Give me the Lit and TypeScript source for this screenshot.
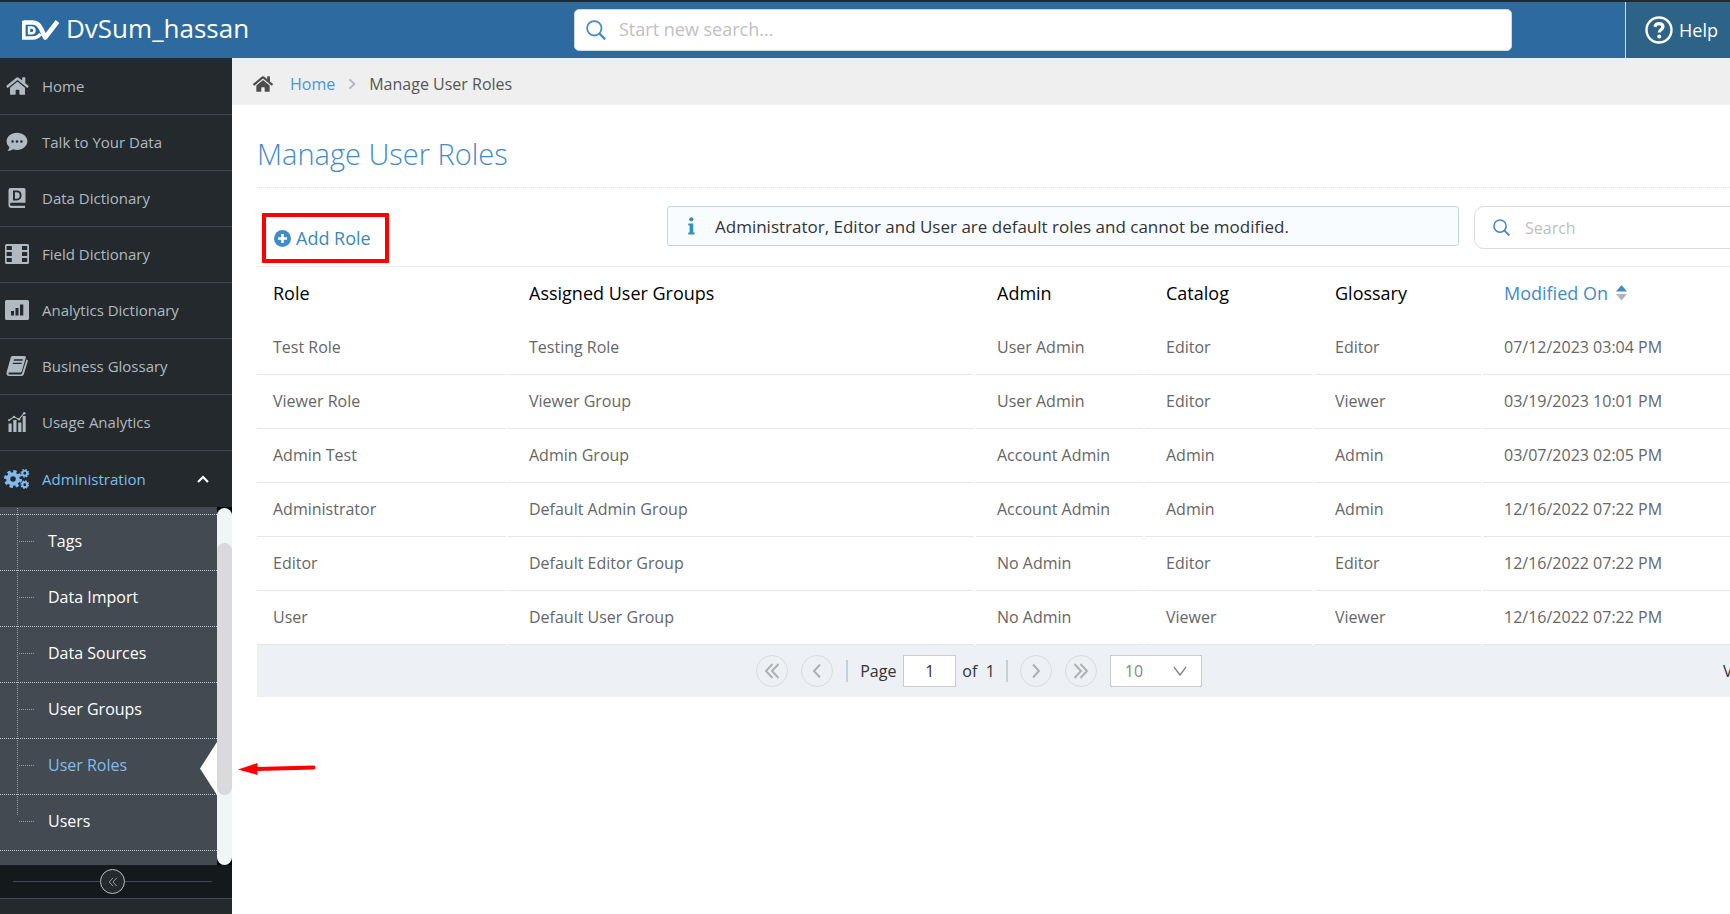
import { LitElement, html, css, svg } from "lit";
import { customElement, state } from "lit/decorators.js";

const homePath =
  "M280.37 148.26L96 300.11V464a16 16 0 0 0 16 16l112.06-.29a16 16 0 0 0 15.92-16V368a16 16 0 0 1 16-16h64a16 16 0 0 1 16 16v95.64a16 16 0 0 0 16 16.05L464 480a16 16 0 0 0 16-16V300L295.67 148.26a12.19 12.19 0 0 0-15.3 0zM571.6 251.47L488 182.56V44.05a12 12 0 0 0-12-12h-56a12 12 0 0 0-12 12v72.61L318.47 43a48 48 0 0 0-61 0L4.34 251.47a12 12 0 0 0-1.6 16.9l25.5 31A12 12 0 0 0 45.15 301l235.22-193.74a12.19 12.19 0 0 1 15.3 0L530.9 301a12 12 0 0 0 16.9-1.6l25.5-31a12 12 0 0 0-1.7-16.93z";

const icons: Record<string, unknown> = {
  home: html`<svg viewBox="0 0 576 512" width="23" height="20" fill="currentColor"><path d=${homePath} /></svg>`,
  chat: html`<svg viewBox="0 0 24 20" width="24" height="20" fill="currentColor">
    <path fill-rule="evenodd" d="M12 .8C6.200.8 1.600 4.600 1.600 9.300c0 2.300 1 4.300 2.800 5.800-.2 1.500-.9 2.900-1.900 4 2.200-.2 4-.8 5.400-1.800 1.300.4 2.700.6 4.100.6 5.800 0 10.400-3.800 10.400-8.600S17.800.8 12 .8zM7.600 8.200a1.300 1.300 0 1 1 0 2.600 1.300 1.300 0 0 1 0-2.600zm4.400 0a1.300 1.300 0 1 1 0 2.600 1.300 1.300 0 0 1 0-2.600zm4.400 0a1.300 1.300 0 1 1 0 2.600 1.300 1.300 0 0 1 0-2.600z"/></svg>`,
  dictionary: html`<svg viewBox="0 0 24 20" width="24" height="20" fill="currentColor">
    <path fill-rule="evenodd" d="M5.500 0H19a1.500 1.500 0 0 1 1.500 1.500v13.300H6c-1 0-1.200 2.900 0 2.900h14V20H6.200C4.500 20 3.500 18.700 3.500 17V2a2 2 0 0 1 2-2zM8 2.600v9.800h3.800c3 0 4.800-1.900 4.800-4.900s-1.800-4.900-4.800-4.900zm1.900 1.600h1.800c2 0 3 1.200 3 3.300s-1 3.300-3 3.300H9.900z"/><path d="M6.300 15.700h13.500v1.100H6.300z" fill="#23292c"/></svg>`,
  film: html`<svg viewBox="0 0 24 20" width="24" height="20" fill="currentColor">
    <path fill-rule="evenodd" d="M1.500 0h21A1.500 1.500 0 0 1 24 1.500v17a1.500 1.500 0 0 1-1.500 1.500h-21A1.500 1.500 0 0 1 0 18.500v-17A1.500 1.500 0 0 1 1.500 0zM1.600 2v4h5.200V2zm0 6v4h5.200V8zm0 6v4h5.200v-4zM17 2v4h5.200V2zm0 6v4h5.200V8zm0 6v4h5.200v-4z"/></svg>`,
  chart: html`<svg viewBox="0 0 24 20" width="24" height="20" fill="currentColor">
    <path fill-rule="evenodd" d="M1.500 0h21A1.500 1.500 0 0 1 24 1.500v17a1.500 1.500 0 0 1-1.500 1.500h-21A1.500 1.500 0 0 1 0 18.500v-17A1.500 1.500 0 0 1 1.500 0zM6 11v4.500h3V11zm4.500-3v7.500h3V8zM15 4.500v11h3.300v-11z"/></svg>`,
  book: html`<svg viewBox="0 0 24 20" width="24" height="20" fill="currentColor">
    <path fill-rule="evenodd" d="M7.800 0h11.700c1 0 1.600.8 1.300 1.800l-4 13.400c-.3.900-1 1.300-1.800 1.300H4.200c-.9 0-1.200 2 .3 2h11c.8 0 1.200-.4 1.500-1.200L21.500 3.400c1 .2 1.600.8 1.300 1.900l-4 13c-.4 1.100-1.200 1.700-2.300 1.700H4.300C2.300 20 1 18.200 1.600 16.200L5.800 1.500C6.100.5 6.800 0 7.800 0zM9 3.300l-.4 1.400h8.900l.4-1.400zM8 6.700l-.4 1.400h8.900l.4-1.400z"/></svg>`,
  usage: html`<svg viewBox="0 0 24 20" width="24" height="20" fill="currentColor">
    <path d="M3.500 11.500h3.200V20H3.500zM8.300 8h3.200v12H8.300zM13.200 10.500h3.200V20h-3.200zM17.700 4h3v16h-3z"/><path d="M4 8.200l5-3.400 5 2.600L19.300.9" fill="none" stroke="currentColor" stroke-width="1.100"/><circle cx="4.200" cy="8.200" r="1.100"/><circle cx="9" cy="4.900" r="1.200"/><circle cx="14" cy="7.300" r="1.200"/><circle cx="19.300" cy="1.200" r="1.200"/></svg>`,
  cogs: html`<svg viewBox="0 0 26 20" width="26" height="20" fill="none" stroke="currentColor">
    <circle cx="9" cy="10" r="4.800" stroke-width="4"/><circle cx="9" cy="10" r="7.600" stroke-width="2.800" stroke-dasharray="3.300 2.670"/>
    <circle cx="20.800" cy="4.300" r="2.400" stroke-width="1.900"/><circle cx="20.800" cy="4.300" r="3.700" stroke-width="1.300" stroke-dasharray="1.600 1.300"/>
    <circle cx="20.800" cy="15.700" r="2.400" stroke-width="1.900"/><circle cx="20.800" cy="15.700" r="3.700" stroke-width="1.300" stroke-dasharray="1.600 1.300"/></svg>`,
};

const magnifier = html`<svg class="lens" viewBox="0 0 20 20" width="20" height="20" fill="none" stroke="currentColor" stroke-width="1.800" aria-hidden="true"><circle cx="8.300" cy="8.300" r="7.200"/><path d="M13.200 13.400L19.200 19.400" stroke-width="2.200"/></svg>`;

const chevrons = (...paths: string[]) => html`<svg viewBox="0 0 16 16" width="16" height="16" fill="none" stroke="currentColor" stroke-width="2" aria-hidden="true">
  ${paths.map((d) => svg`<path d=${d} />`)}
</svg>`;

const menu = [
  ["home", "Home"],
  ["chat", "Talk to Your Data"],
  ["dictionary", "Data Dictionary"],
  ["film", "Field Dictionary"],
  ["chart", "Analytics Dictionary"],
  ["book", "Business Glossary"],
  ["usage", "Usage Analytics"],
];

const submenu = ["Tags", "Data Import", "Data Sources", "User Groups", "User Roles", "Users"];

const roles = [
  ["Test Role", "Testing Role", "User Admin", "Editor", "Editor", "07/12/2023 03:04 PM"],
  ["Viewer Role", "Viewer Group", "User Admin", "Editor", "Viewer", "03/19/2023 10:01 PM"],
  ["Admin Test", "Admin Group", "Account Admin", "Admin", "Admin", "03/07/2023 02:05 PM"],
  ["Administrator", "Default Admin Group", "Account Admin", "Admin", "Admin", "12/16/2022 07:22 PM"],
  ["Editor", "Default Editor Group", "No Admin", "Editor", "Editor", "12/16/2022 07:22 PM"],
  ["User", "Default User Group", "No Admin", "Viewer", "Viewer", "12/16/2022 07:22 PM"],
];

const base = css`
  * { box-sizing: border-box; }
  button, input, select { font: inherit; color: inherit; margin: 0; }
  button { background: none; border: 0; padding: 0; cursor: pointer; }
  a { color: inherit; text-decoration: none; }
  svg { display: block; flex: none; }
  input::placeholder { color: #bfbfbf; opacity: 1; }
`;

@customElement("top-bar")
class TopBar extends LitElement {
  static styles = [base, css`
    :host { display: flex; align-items: stretch; height: 58px; border-top: 2px solid #23292c; background: #2d6aa0; color: #fff; }
    .brand { display: flex; align-items: center; gap: 6px; flex: 0 0 574px; padding-left: 22px; font-size: 26px; line-height: 52px; padding-bottom: 4px; }
    .logo { margin-top: 4px; }
    .search { flex: 1; align-self: center; display: flex; align-items: center; height: 42px; gap: 13px; padding: 0 11px; margin-right: 113px; border: 1px solid #d3d8dc; border-radius: 5px; background: #fff; color: #428bca; }
    .search input { flex: 1; border: 0; outline: 0; background: none; color: #555; font-size: 18px; padding: 0 0 2px; }
    .help { display: flex; align-items: center; gap: 6px; flex: 0 0 105px; padding-left: 19px; border-left: 1px solid #d5e1ea; background: #2e6388; font-size: 18px; }
  `];
  render() {
    return html`
      <a class="brand" href="#">
        <svg class="logo" viewBox="0 0 38 21" width="38" height="21" fill="none" stroke="#fff" aria-hidden="true">
          <path d="M1.700 2.500H10.500C15 2.500 17.300 5 19 8.500L23.200 17.500L35.500 1.500" stroke-width="4.600" stroke-linejoin="round"/>
          <path d="M1.800 .8V18H10.500C14 18 16.500 16.800 18.500 14" stroke-width="3.600"/>
          <path d="M7 7.500V13.300H9.500C13.500 13.300 13.500 7.500 9.500 7.500Z" stroke-width="2.400"/>
        </svg>
        <span>DvSum_hassan</span>
      </a>
      <label class="search">${magnifier}<input type="text" placeholder="Start new search..." aria-label="Start new search" /></label>
      <button class="help">
        <svg viewBox="0 0 28 28" width="28" height="28" fill="none" stroke="#fff" aria-hidden="true">
          <circle cx="14" cy="14" r="12.500" stroke-width="2.400"/>
          <path d="M9.800 10.800C10.500 8.500 12 7.700 14 7.700C16.500 7.700 18 9 18 10.800C18 13.500 14.200 13.400 14.200 16.600" stroke-width="3.200"/>
          <circle cx="14.200" cy="20.400" r="2" fill="#fff" stroke="none"/>
        </svg>
        <span>Help</span>
      </button>`;
  }
}

@customElement("side-nav")
class SideNav extends LitElement {
  @state() active = "User Roles";
  static styles = [base, css`
    :host { display: flex; flex-direction: column; flex: 0 0 232px; min-height: 0; background: #23292c; color: #b1b9c1; font-size: 15px; }
    nav { padding-top: 1px; }
    .item { display: flex; align-items: center; gap: 13px; width: 100%; height: 56px; padding: 0 0 1px 5px; border-bottom: 1px solid #3d4b53; text-align: left; }
    .glyph { width: 24px; display: flex; align-items: center; justify-content: center; }
    .open { color: #81bced; border-bottom: 0; padding-bottom: 0; }
    .open .caret { color: #fff; margin-left: auto; margin-right: 21px; }
    .panel { flex: 1; min-height: 0; display: flex; background: #01060d; }
    .list { flex: 1; min-height: 0; overflow: hidden; position: relative; background: #434a52; color: #fff; font-size: 16px; padding-top: 7px; }
    .list::before { content: ""; position: absolute; left: 17px; top: 1px; height: 307px; border-left: 1px dotted #98a2ab; }
    .sub { position: relative; display: flex; align-items: center; height: 56px; padding-left: 48px; padding-bottom: 3px; border-top: 1px dotted #b9c6cf; }
    .sub::before { content: ""; position: absolute; left: 19px; top: 26px; width: 15px; border-top: 1px dotted #98a2ab; }
    .end { border-top: 1px dotted #b9c6cf; }
    .current { color: #81bced; }
    .current::after { content: ""; position: absolute; right: 0; top: 3px; width: 17px; height: 53px; background: #fff; clip-path: polygon(100% 0, 0 50%, 100% 100%); }
    .rail { width: 15px; border-radius: 8px; background: #f0f5f5; padding: 35px 0 70px; margin-top: 1px; display: flex; }
    .thumb { flex: 1; border-radius: 8px; background: #d9d9de; }
    .foot { display: flex; align-items: center; height: 34px; padding: 0 20px 0 13px; background: #14191b; border-bottom: 1px solid #3d4b53; }
    .foot::before, .foot::after { content: ""; flex: 1; border-top: 1px solid #3d4b53; }
    .fold { display: flex; align-items: center; justify-content: center; width: 25px; height: 25px; border: 1px solid #b9bdc0; border-radius: 50%; background: #23292c; color: #a4aaae; }
    .fold svg { width: 12px; height: 12px; }
    .rest { height: 15px; }
  `];
  render() {
    return html`
      <nav>
        ${menu.map(([icon, label]) => html`<a class="item" href="#"><span class="glyph">${icons[icon]}</span>${label}</a>`)}
        <button class="item open" aria-expanded="true"><span class="glyph">${icons.cogs}</span>Administration
          <svg class="caret" viewBox="0 0 16 16" width="16" height="16" fill="none" stroke="currentColor" stroke-width="2.200" aria-hidden="true"><path d="M3 11L8 6L13 11"/></svg>
        </button>
      </nav>
      <div class="panel">
        <div class="list">
          ${submenu.map((label) => html`<a class="sub ${label === this.active ? "current" : ""}" href="#" @click=${() => (this.active = label)}>${label}</a>`)}
          <div class="end"></div>
        </div>
        <div class="rail"><div class="thumb"></div></div>
      </div>
      <div class="foot"><button class="fold" aria-label="Collapse menu">
        <svg viewBox="0 0 16 16" fill="none" stroke="currentColor" stroke-width="1.200" aria-hidden="true"><path d="M8 2.500L3 8L8 13.500M13 2.500L8 8L13 13.500"/></svg>
      </button></div>
      <div class="rest"></div>`;
  }
}

@customElement("role-table")
class RoleTable extends LitElement {
  static styles = [base, css`
    :host { display: block; }
    table { width: calc(100% + 2px); margin-left: -2px; table-layout: fixed; border-collapse: separate; border-spacing: 2px 0; font-size: 16px; color: #666; }
    .c-role { width: 249px; }
    .c-groups { width: 466px; }
    .c-level { width: 167px; }
    th, td { height: 54px; padding: 0 0 2px 21px; text-align: left; white-space: nowrap; }
    th:first-child, td:first-child { padding-left: 16px; }
    th { font-weight: 500; font-size: 18px; color: #000; }
    td { border-bottom: 1px solid #e6e6e6; }
    .sort { display: flex; align-items: center; gap: 8px; color: #428bca; }
    .pager { display: flex; align-items: center; height: 52px; background: #edf0f5; color: #333; font-size: 16px; }
    .controls { flex: 1; display: flex; align-items: center; justify-content: center; }
    .round { display: flex; align-items: center; justify-content: center; width: 32px; height: 32px; margin-right: 13px; border: 1px solid #d9dcdf; border-radius: 50%; color: #b0b0b0; }
    .bar { width: 2px; height: 22px; background: #c5d1d8; margin-right: 12px; }
    .number { width: 53px; height: 32px; margin: 0 6px 0 7px; padding: 0; border: 1px solid #ccc; border-radius: 0; background: #fff; text-align: center; }
    .page { display: flex; align-items: center; }
    .total { margin-right: 11px; }
    .size { position: relative; display: flex; align-items: center; }
    .size select { appearance: none; width: 92px; height: 32px; padding: 0 14px; border: 1px solid #ccc; border-radius: 0; background: #fff; color: #888; }
    .size svg { position: absolute; right: 14px; pointer-events: none; color: #888; }
    .status { flex: 0 0 129px; padding-left: 22px; white-space: nowrap; }
  `];
  render() {
    return html`
      <table>
        <colgroup><col class="c-role" /><col class="c-groups" /><col class="c-level" /><col class="c-level" /><col class="c-level" /><col /></colgroup>
        <thead><tr>
          <th>Role</th><th>Assigned User Groups</th><th>Admin</th><th>Catalog</th><th>Glossary</th>
          <th><button class="sort">Modified On
            <svg viewBox="0 0 11 16" width="11" height="16" aria-hidden="true"><path d="M5.500 0L11 6.500H0z" fill="#428bca"/><path d="M0 9H11L5.500 15.500z" fill="#b0b5bb"/></svg>
          </button></th>
        </tr></thead>
        <tbody>${roles.map((row) => html`<tr>${row.map((cell) => html`<td>${cell}</td>`)}</tr>`)}</tbody>
      </table>
      <div class="pager">
        <div class="controls">
          <button class="round" aria-label="First page">${chevrons("M8.500 1L2 8L8.500 15", "M14.500 1L8 8L14.500 15")}</button>
          <button class="round" aria-label="Previous page">${chevrons("M11 1.500L5 8L11 14.500")}</button>
          <span class="bar"></span>
          <label class="page">Page <input class="number" type="text" .value=${"1"} /></label>
          <span class="total">of&nbsp; 1</span>
          <span class="bar"></span>
          <button class="round" aria-label="Next page">${chevrons("M5 1.500L11 8L5 14.500")}</button>
          <button class="round" aria-label="Last page">${chevrons("M1.500 1L8 8L1.500 15", "M7.500 1L14 8L7.500 15")}</button>
          <span class="size">
            <select aria-label="Rows per page"><option>10</option><option>25</option><option>50</option></select>
            <svg viewBox="0 0 16 12" width="16" height="12" fill="none" stroke="currentColor" stroke-width="1.400" aria-hidden="true"><path d="M2 2L8 10L14 2"/></svg>
          </span>
        </div>
        <span class="status">View 1 - 6 of 6</span>
      </div>`;
  }
}

@customElement("app-root")
class AppRoot extends LitElement {
  static styles = [base, css`
    :host { display: flex; flex-direction: column; height: 100vh; overflow: hidden; background: #fff; font-family: "Open Sans", "Noto Sans", sans-serif; font-size: 16px; color: #333; }
    .body { flex: 1; display: flex; min-height: 0; }
    main { position: relative; flex: 1; min-width: 0; overflow: hidden; }
    .crumbs { display: flex; align-items: center; height: 47px; padding: 4px 0 0 21px; background: #efefef; color: #555; }
    .crumbs a { color: #4a97d2; }
    .crumb-home { margin-right: 17px; }
    .crumb-sep { margin: 0 12px; color: #b2b6bf; }
    .content { margin: 0 -100px 0 25px; }
    h1 { margin: 0; height: 83px; padding-top: 26px; border-bottom: 1px dotted #e2e2e2; font-size: 29px; line-height: 46px; font-weight: 300; color: #428bca; }
    .tools { display: flex; align-items: flex-start; padding-top: 18px; height: 79px; border-bottom: 1px solid #ececec; }
    .add-wrap { flex: 0 0 410px; padding: 7px 0 0 5px; }
    .add { display: flex; align-items: center; gap: 5px; width: 127px; height: 50px; padding-left: 8px; border: 4px solid #f00; border-radius: 1px; color: #3a8ab9; font-size: 18px; font-weight: 500; }
    .add svg { color: #428bca; }
    .info { flex: 1 1 0; display: flex; align-items: center; height: 40px; padding-left: 20px; gap: 20px; border: 1px solid #bfd6ea; border-radius: 3px; background: #f8fcff; font-size: 17px; white-space: nowrap; }
    .find { flex: 0 0 356px; display: flex; align-items: center; gap: 15px; height: 43px; margin-left: 15px; padding-left: 18px; border: 1px solid #dcdcdc; border-radius: 10px; color: #428bca; }
    .find input { flex: 1; border: 0; outline: 0; background: none; padding: 0; color: #555; }
    .find .lens { width: 17px; height: 17px; }
    .pointer { position: absolute; left: 5px; top: 703px; }
  `];
  render() {
    return html`
      <top-bar></top-bar>
      <div class="body">
        <side-nav></side-nav>
        <main>
          <div class="crumbs">
            <svg class="crumb-home" viewBox="0 0 576 512" width="20" height="18" fill="#4d4d4d" aria-hidden="true"><path d=${homePath} /></svg>
            <a href="#">Home</a>
            <svg class="crumb-sep" viewBox="0 0 10 12" width="10" height="12" fill="none" stroke="currentColor" stroke-width="1.800" aria-hidden="true"><path d="M2.500 1.500L7.500 6L2.500 10.500"/></svg>
            <span>Manage User Roles</span>
          </div>
          <div class="content">
            <h1>Manage User Roles</h1>
            <div class="tools">
              <div class="add-wrap">
                <button class="add">
                  <svg viewBox="0 0 17 17" width="17" height="17" aria-hidden="true"><circle cx="8.500" cy="8.500" r="8.500" fill="currentColor"/><path d="M8.500 4V13M4 8.500H13" stroke="#fff" stroke-width="2.600"/></svg>
                  Add Role
                </button>
              </div>
              <div class="info">
                <svg viewBox="0 0 7 18" width="7" height="18" fill="#3490b8" aria-hidden="true"><circle cx="3.300" cy="2.300" r="2.100"/><path d="M.3 6.500H5.300V15.500H6.600V17.500H.3V15.500H1.600V8.500H.3z"/></svg>
                <span>Administrator, Editor and User are default roles and cannot be modified.</span>
              </div>
              <label class="find">${magnifier}<input type="text" placeholder="Search" aria-label="Search roles" /></label>
            </div>
            <role-table></role-table>
          </div>
          <svg class="pointer" viewBox="0 0 80 16" width="80" height="16" aria-hidden="true"><path d="M20 8L76.500 6.500" stroke="#f00" stroke-width="4" stroke-linecap="round"/><path d="M1 8.500L20.500 2V14z" fill="#f00"/></svg>
        </main>
      </div>`;
  }
}
